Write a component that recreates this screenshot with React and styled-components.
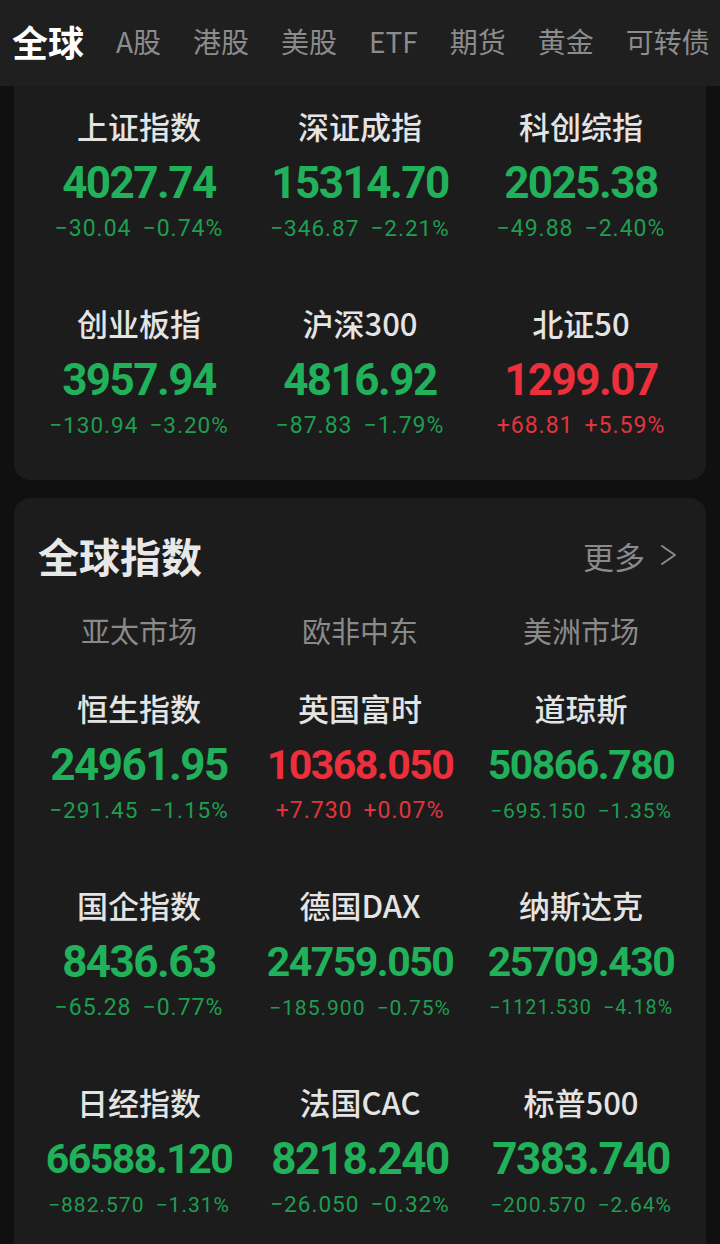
import React from 'react'
import styled, {createGlobalStyle} from 'styled-components'

const GlobalStyle = createGlobalStyle`
  html, body {
    margin: 0;
    background: #101010;
    font-family: "Noto Sans CJK SC", "Noto Sans", sans-serif;
  }
`

const tabs = ["全球", "A股", "港股", "美股", "ETF", "期货", "黄金", "可转债"]

const domestic = [
  {name: "上证指数", value: "4027.74", diff: "−30.04", pct: "−0.74%", up: false},
  {name: "深证成指", value: "15314.70", diff: "−346.87", pct: "−2.21%", up: false},
  {name: "科创综指", value: "2025.38", diff: "−49.88", pct: "−2.40%", up: false},
  {name: "创业板指", value: "3957.94", diff: "−130.94", pct: "−3.20%", up: false},
  {name: "沪深300", value: "4816.92", diff: "−87.83", pct: "−1.79%", up: false},
  {name: "北证50", value: "1299.07", diff: "+68.81", pct: "+5.59%", up: true},
]

const world = [
  {name: "恒生指数", value: "24961.95", diff: "−291.45", pct: "−1.15%", up: false},
  {name: "英国富时", value: "10368.050", diff: "+7.730", pct: "+0.07%", up: true},
  {name: "道琼斯", value: "50866.780", diff: "−695.150", pct: "−1.35%", up: false},
  {name: "国企指数", value: "8436.63", diff: "−65.28", pct: "−0.77%", up: false},
  {name: "德国DAX", value: "24759.050", diff: "−185.900", pct: "−0.75%", up: false},
  {name: "纳斯达克", value: "25709.430", diff: "−1121.530", pct: "−4.18%", up: false},
  {name: "日经指数", value: "66588.120", diff: "−882.570", pct: "−1.31%", up: false},
  {name: "法国CAC", value: "8218.240", diff: "−26.050", pct: "−0.32%", up: false},
  {name: "标普500", value: "7383.740", diff: "−200.570", pct: "−2.64%", up: false},
]

// long numbers get shrunk to fit the column, like the app does
const valueSize = (v) => v.length > 8 ? 41 : 44
const changeSize = (a, b) => Math.min(23, 180 / ((a.length + b.length + 1) * 0.57))

const IndexCell = ({item}) => (
  <Cell>
    <Name>{item.name}</Name>
    <Value $up={item.up} $size={valueSize(item.value)}>{item.value}</Value>
    <Change $up={item.up} $size={changeSize(item.diff, item.pct)}>
      <span>{item.diff}</span>
      <span>{item.pct}</span>
    </Change>
  </Cell>
)

const App = () => {
  return (
    <Page>
      <GlobalStyle />
      <Nav>
        {tabs.map((t, i) => (
          <NavItem key={t} $active={i === 0}>{t}</NavItem>
        ))}
      </Nav>
      <Content>
        <Card $cut>
          <Grid $top={20} $bottom={39}>
            {domestic.map(item => <IndexCell key={item.name} item={item} />)}
          </Grid>
        </Card>
        <Card>
          <Header>
            <Title>全球指数</Title>
            <More>
              更多
              <svg width="18" height="22" viewBox="0 0 18 22" fill="none">
                <polyline points="2,2 15,11 2,20" stroke="#8a8a8a" strokeWidth="2" strokeLinecap="round" strokeLinejoin="round" />
              </svg>
            </More>
          </Header>
          <Markets>
            <span>亚太市场</span>
            <span>欧非中东</span>
            <span>美洲市场</span>
          </Markets>
          <Grid $top={38} $bottom={40}>
            {world.map(item => <IndexCell key={item.name} item={item} />)}
          </Grid>
        </Card>
      </Content>
    </Page>
  )
}

export default App

const Page = styled.div`
  width: 720px;
  height: 1244px;
  overflow: hidden;
  background: #101010;
`

const Nav = styled.nav`
  height: 86px;
  box-sizing: border-box;
  padding: 0 0 4px 12px;
  background: #1f1f1f;
  display: flex;
  align-items: center;
  gap: 32px;
  white-space: nowrap;
  overflow: hidden;
`

const NavItem = styled.span`
  font-size: ${p => p.$active ? '36px' : '28px'};
  font-weight: ${p => p.$active ? 700 : 400};
  color: ${p => p.$active ? '#ffffff' : '#8c8c8c'};
  flex-shrink: 0;
`

const Content = styled.main`
  padding: 0 14px;
  display: flex;
  flex-direction: column;
  gap: 18px;
`

const Card = styled.section`
  background: #1c1c1c;
  border-radius: ${p => p.$cut ? '0 0 16px 16px' : '16px'};
`

const Grid = styled.div`
  display: grid;
  grid-template-columns: repeat(3, 1fr);
  row-gap: 59px;
  padding: ${p => p.$top}px 14.5px ${p => p.$bottom}px;
`

const Cell = styled.div`
  display: flex;
  flex-direction: column;
  align-items: center;
`

const Name = styled.div`
  height: 40px;
  line-height: 40px;
  font-size: 31px;
  font-weight: 500;
  color: #e4e4e4;
  white-space: nowrap;
`

const Value = styled.div`
  margin-top: 11px;
  height: 52px;
  line-height: 52px;
  font-family: Roboto, "Noto Sans", sans-serif;
  font-size: ${p => p.$size}px;
  font-weight: 700;
  letter-spacing: -1.5px;
  color: ${p => p.$up ? '#ec2f3c' : '#20b15a'};
  white-space: nowrap;
`

const Change = styled.div`
  margin-top: 5px;
  height: 30px;
  line-height: 30px;
  font-family: Roboto, "Noto Sans", sans-serif;
  font-size: ${p => p.$size}px;
  letter-spacing: 1px;
  color: ${p => p.$up ? '#e2343f' : '#1d9e50'};
  display: flex;
  gap: 11px;
  white-space: nowrap;
`

const Header = styled.div`
  display: flex;
  justify-content: space-between;
  align-items: center;
  height: 50px;
  padding: 32px 28px 0 24px;
`

const Title = styled.h2`
  margin: 0;
  font-size: 41px;
  font-weight: 700;
  color: #e8e8e8;
`

const More = styled.div`
  display: flex;
  align-items: center;
  gap: 15px;
  font-size: 31px;
  color: #8a8a8a;
`

const Markets = styled.div`
  display: grid;
  grid-template-columns: repeat(3, 1fr);
  padding: 0 14.5px;
  margin-top: 30px;
  line-height: 40px;
  font-size: 29px;
  color: #8a8a8a;
  text-align: center;
`
